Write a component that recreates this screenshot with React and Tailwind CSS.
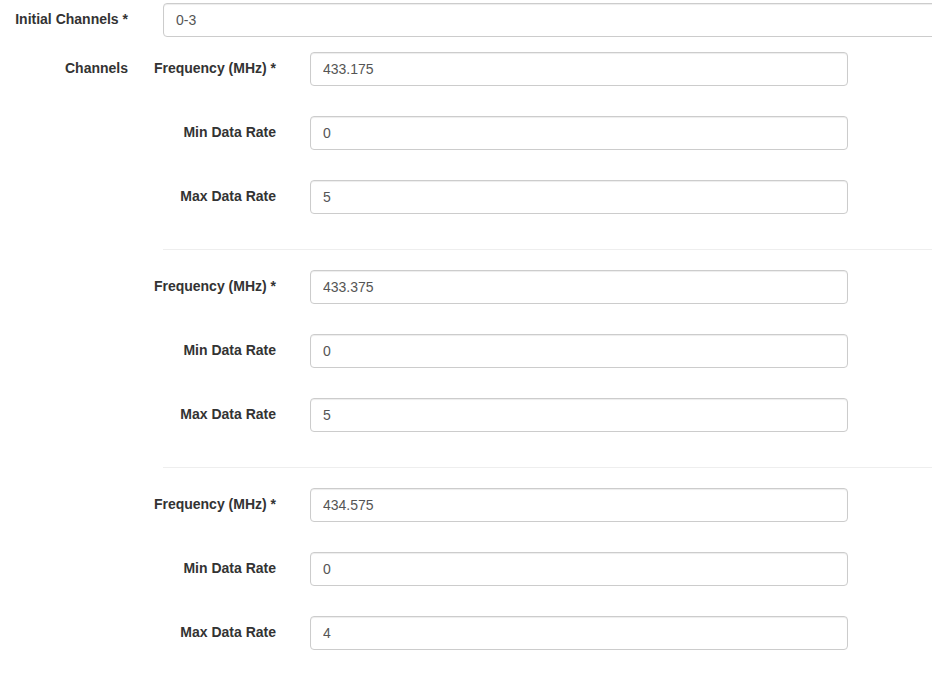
const channels = [
	{ freq: "433.175", min: "0", max: "5" },
	{ freq: "433.375", min: "0", max: "5" },
	{ freq: "434.575", min: "0", max: "4" },
];

const inputCls =
	"block h-[34px] rounded-[4px] border border-[#ccc] bg-white px-[12px] text-[14px] leading-[20px] text-[#555] shadow-[inset_0_1px_1px_rgba(0,0,0,0.075)] outline-none";

const Field = ({ label, value }) => (
	<div className="flex items-start gap-[34px]">
		<div className="flex w-[113px] shrink-0 justify-end whitespace-nowrap pt-[6px] font-bold leading-[20px]">
			{label}
		</div>
		<input className={`${inputCls} w-[538px]`} defaultValue={value} />
	</div>
);

const App = () => {
	return (
		<div className="h-[676px] w-[932px] overflow-hidden bg-white pt-[3px] font-['Liberation_Sans',Arial,sans-serif] text-[14px] text-[#333]">
			<div className="mb-[15px] flex items-start gap-[35px]">
				<div className="w-[128px] shrink-0 whitespace-nowrap pt-[6px] text-right font-bold leading-[20px]">
					Initial Channels *
				</div>
				<input className={`${inputCls} w-[800px] shrink-0`} defaultValue="0-3" />
			</div>
			<div className="flex items-start gap-[35px]">
				<div className="w-[128px] shrink-0 pt-[6px] text-right font-bold leading-[20px]">
					Channels
				</div>
				<div className="flex w-[800px] shrink-0 flex-col">
					{channels.map((ch, i) => (
						<div key={i}>
							{i > 0 && <hr className="my-[20px] border-0 border-t border-[#eee]" />}
							<div className="flex flex-col gap-[30px]">
								<Field label="Frequency (MHz) *" value={ch.freq} />
								<Field label="Min Data Rate" value={ch.min} />
								<Field label="Max Data Rate" value={ch.max} />
							</div>
							{i < channels.length - 1 && <div className="h-[15px]" />}
						</div>
					))}
				</div>
			</div>
		</div>
	);
};

export default App;
